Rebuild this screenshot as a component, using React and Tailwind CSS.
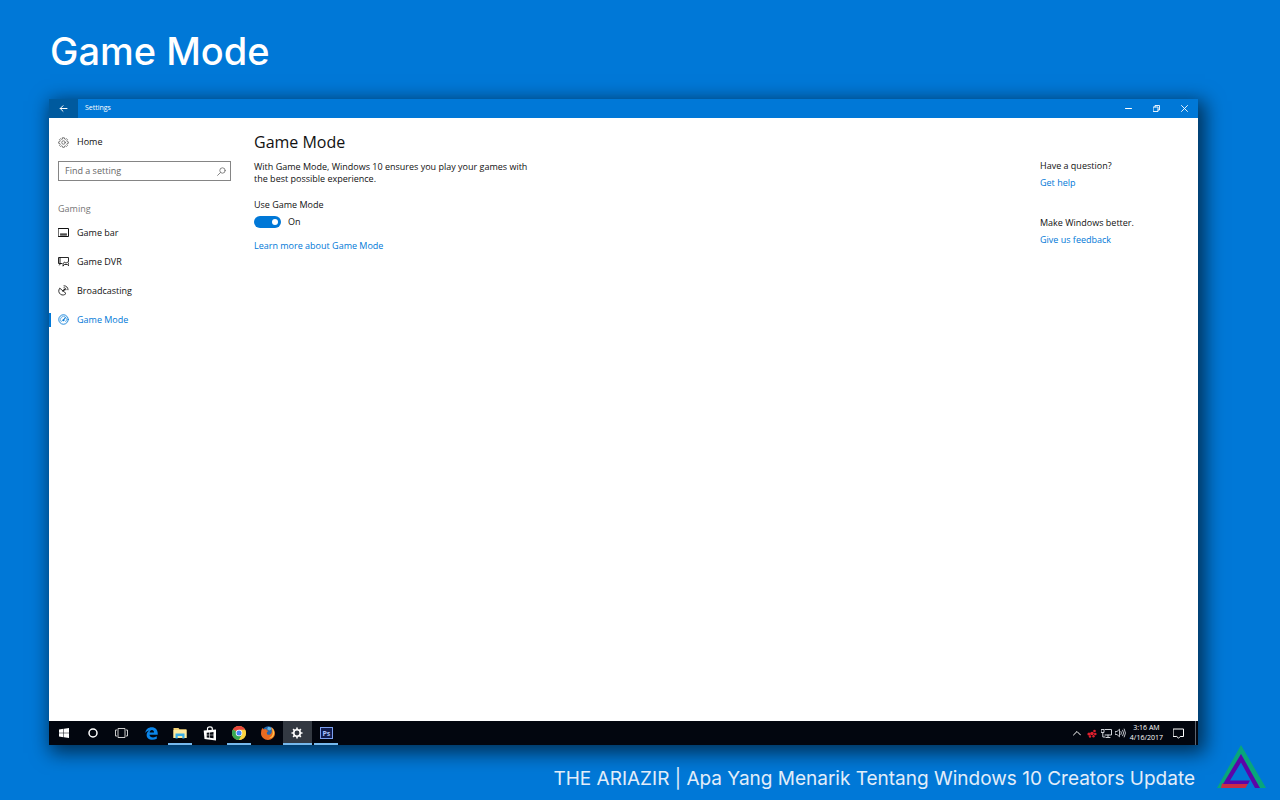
import { useState } from 'react';

const line = { fill: 'none', stroke: 'currentColor', strokeLinecap: 'round', strokeLinejoin: 'round' };

function GearOutline() {
  return (
    <svg viewBox="0 0 22 22" className="size-[11px] text-[#555]" {...line} strokeWidth="1.500">
      <path d="M9.300 1.500h3.400l.5 2.500 1.700.7L17 3.300 19 5.400l-1.400 2 .7 1.800 2.400.5v2.900l-2.400.5-.7 1.800 1.400 2-2.100 2.100-2-1.400-1.700.7-.5 2.400H9.300l-.5-2.400-1.700-.7-2 1.400L3 16.900l1.400-2-.7-1.800-2.400-.5V9.700l2.400-.5.7-1.800L3 5.400l2.100-2.100 2 1.400 1.700-.7z" />
      <circle cx="11" cy="11" r="3.500" />
    </svg>
  );
}

function GameBarIcon() {
  return (
    <svg viewBox="0 0 11 11" className="size-[11px]" {...line} strokeWidth="1">
      <rect x="0.5" y="1.500" width="10" height="8" />
      <path d="M2.500 7h6M2.500 8h6" />
    </svg>
  );
}

function DvrIcon() {
  return (
    <svg viewBox="0 0 22 22" className="size-[11px]" {...line} strokeWidth="1.800">
      <path d="M8 15H1V3h20v8M4 3v12M5 15l-2 3" />
      <path d="M10 19.500c0-4 1-7 3-7l1.500 1h3l1.500-1c2 0 2.500 3 2.500 7l-3-2.500h-5z" />
    </svg>
  );
}

function BroadcastIcon() {
  return (
    <svg viewBox="0 0 22 22" className="size-[11px]" {...line} strokeWidth="1.700">
      <path d="M3 7c-3 4-1.500 9 2 11.500s8 2 10.500-1z" />
      <path d="M9.500 12.500 13 9M12 5.500c2.500 0 4 1.500 4 4M12 1.500c5 0 8 3.500 8 8" />
      <circle cx="12.500" cy="9.500" r="1" />
    </svg>
  );
}

function GaugeIcon() {
  return (
    <svg viewBox="0 0 22 22" className="size-[11px]" {...line} strokeWidth="1.700">
      <circle cx="11" cy="11" r="9.500" />
      <path d="M6.500 15.500a6.300 6.300 0 1 1 9 0" strokeWidth="1.200" />
      <path d="m10.500 12.500 4-5" strokeWidth="2.200" />
      <circle cx="10.500" cy="12.500" r="1.300" />
    </svg>
  );
}

const navItems = [
  { label: 'Game bar', Icon: GameBarIcon },
  { label: 'Game DVR', Icon: DvrIcon },
  { label: 'Broadcasting', Icon: BroadcastIcon },
  { label: 'Game Mode', Icon: GaugeIcon, active: true },
];

function TitleBar() {
  return (
    <header className="flex h-[19px] items-stretch bg-[#0078d7] text-white">
      <button aria-label="Back" className="flex w-[29px] items-center justify-center bg-[#005a9e]">
        <svg viewBox="0 0 9 9" className="size-[9px]" {...line} strokeWidth="1">
          <path d="M8 4.500H1.200M4 1.700 1.200 4.500 4 7.300" />
        </svg>
      </button>
      <span className="flex flex-1 items-center pl-[7px] text-[7px] font-medium">Settings</span>
      <button aria-label="Minimize" className="flex w-7 items-center justify-center">
        <svg viewBox="0 0 7 7" className="size-[7px]" {...line}><path d="M.5 3.500h6" /></svg>
      </button>
      <button aria-label="Restore" className="flex w-7 items-center justify-center">
        <svg viewBox="0 0 7 7" className="size-[7px]" {...line} strokeWidth=".9">
          <path d="M.5 2h4.500v4.500H.5zM2 2V.5h4.500V5H5" />
        </svg>
      </button>
      <button aria-label="Close" className="flex w-7 items-center justify-center">
        <svg viewBox="0 0 7 7" className="size-[7px]" {...line} strokeWidth=".9"><path d="m.5.500 6 6m0-6-6 6" /></svg>
      </button>
    </header>
  );
}

function Sidebar() {
  return (
    <aside className="w-[205px] shrink-0 pt-[10px]">
      <a href="#home" className="flex h-7 items-center gap-2 pl-[9px]">
        <GearOutline />
        Home
      </a>
      <div className="mt-[5px] mr-[23px] ml-[9px] flex h-5 items-center border border-[#858585] pr-1 pl-[6px]">
        <input
          type="search"
          aria-label="Find a setting"
          placeholder="Find a setting"
          className="min-w-0 flex-1 bg-transparent outline-none placeholder:text-[#666]"
        />
        <svg viewBox="0 0 9 9" className="size-[9px] text-[#777]" {...line} strokeWidth=".9">
          <circle cx="5.500" cy="3.500" r="2.700" />
          <path d="M3.500 5.500.6 8.400" />
        </svg>
      </div>
      <h2 className="mt-5 pl-[9px] leading-[16px] text-[#767676]">Gaming</h2>
      <nav className="mt-px">
        {navItems.map(({ label, Icon, active }) => (
          <a
            key={label}
            href="#settings"
            aria-current={active ? 'page' : undefined}
            className={active ? 'flex h-[29px] items-center text-[#0078d7]' : 'flex h-[29px] items-center'}
          >
            <span className={active ? 'h-[14px] w-[2px] bg-[#0078d7]' : 'h-[14px] w-[2px]'} />
            <span className="flex items-center gap-2 pl-[7px]">
              <Icon />
              {label}
            </span>
          </a>
        ))}
      </nav>
    </aside>
  );
}

function GameModePanel() {
  const [on, setOn] = useState(true);
  return (
    <section className="min-w-0 flex-1 pt-[13px]">
      <h2 className="text-[16px] leading-[22px]">Game Mode</h2>
      <p className="mt-2 max-w-[284px] leading-3">
        With Game Mode, Windows 10 ensures you play your games with the best possible experience.
      </p>
      <label htmlFor="game-mode" className="mt-[14px] block leading-3">Use Game Mode</label>
      <div className="mt-[5px] flex h-3 items-center gap-[7px]">
        <input
          id="game-mode"
          type="checkbox"
          role="switch"
          checked={on}
          onChange={(e) => setOn(e.target.checked)}
          className="flex h-3 w-[27px] appearance-none items-center rounded-full bg-[#999] px-[3px] before:size-[6px] before:rounded-full before:bg-white checked:justify-end checked:bg-[#0078d7]"
        />
        <span>{on ? 'On' : 'Off'}</span>
      </div>
      <a href="#learn" className="mt-3 block w-fit leading-3 text-[#0078d7]">Learn more about Game Mode</a>
    </section>
  );
}

function HelpPanel() {
  return (
    <aside className="w-[158px] shrink-0 pt-[42px] leading-3">
      <p>Have a question?</p>
      <a href="#help" className="mt-[5px] block w-fit text-[#0078d7]">Get help</a>
      <p className="mt-7">Make Windows better.</p>
      <a href="#feedback" className="mt-[5px] block w-fit text-[#0078d7]">Give us feedback</a>
    </aside>
  );
}

function WindowsLogo() {
  return (
    <svg viewBox="0 0 10 10" className="size-[10px]" fill="white">
      <path d="M0 1.500 4.500.8v4H0zM5 .7 10 0v4.800H5zM0 5.300h4.500v4L0 8.600zM5 5.300h5V10l-5-.7z" />
    </svg>
  );
}

function Cortana() {
  return <svg viewBox="0 0 10 10" className="size-[10px]" fill="none" stroke="white" strokeWidth="1.500"><circle cx="5" cy="5" r="4" /></svg>;
}

function TaskView() {
  return (
    <svg viewBox="0 0 13 10" className="h-[10px] w-[13px]" fill="none" stroke="#ccc" strokeWidth="1">
      <path d="M3 .5h7v9H3zM2 2H.5v6H2M11 2h1.500v6H11" />
    </svg>
  );
}

function Edge() {
  return (
    <svg viewBox="0 0 24 24" className="size-[13px]" fill="#0a84e8">
      <path d="M.5 11C1.500 4.500 6 .5 12.300.5 19.500.5 23.500 5.500 23.500 12v2.500H8.300c.3 3.300 3 4.800 6.500 4.800 2.700 0 4.900-.8 7-2.100v4.700c-2.400 1.200-5 1.700-8 1.700C7 23.600 3 20 3 14.700c0-3.600 2-6.500 5.300-8.200C5.300 7 2.500 8.400.5 11zm8-.8h8.200c0-2.900-1.500-4.600-4-4.600-2.300 0-3.900 1.800-4.200 4.600z" />
    </svg>
  );
}

function Explorer() {
  return (
    <svg viewBox="0 0 14 12" className="h-3 w-[14px]">
      <path d="M.5 1h5l1 1.300h7V11H.5z" fill="#f5d477" />
      <path d="M.5 3h13v8H.5z" fill="#fdeaa0" />
      <path d="M2.500 11.500V6.500h9v5H9.300V9H4.700v2.500z" fill="#39aee8" />
    </svg>
  );
}

function Store() {
  return (
    <svg viewBox="0 0 14 15" className="h-[15px] w-[14px]">
      <path d="M4.500 5V2.700C4.500.2 9.300.2 9.300 2.700V5" fill="none" stroke="white" strokeWidth="1.200" />
      <path d="M.7 4.500 13 3.500V14.500L1.500 13z" fill="white" />
      <path d="M3.700 6.800 6.400 6.500v2.200H3.700zM7 6.400l3.500-.4v2.700H7zM3.700 9.300h2.700v2.400l-2.700-.3zM7 9.300h3.500v2.900L7 11.800z" fill="#050910" />
    </svg>
  );
}

function Chrome() {
  return (
    <svg viewBox="0 0 24 24" className="size-[14px]">
      <circle cx="12" cy="12" r="12" fill="#fbd341" />
      <path d="M12 12 1.600 6A12 12 0 0 1 22.400 6z" fill="#e8453c" />
      <path d="M1.600 6A12 12 0 0 0 12 24l5.200-9L12 12z" fill="#38a852" />
      <path d="M12 6.500h10.600A12 12 0 0 1 12 24l5.200-9z" fill="#fbd341" />
      <circle cx="12" cy="12" r="5.600" fill="white" />
      <circle cx="12" cy="12" r="4.300" fill="#4285f4" />
    </svg>
  );
}

function Firefox() {
  return (
    <svg viewBox="0 0 24 24" className="size-[14px]">
      <circle cx="12.500" cy="11" r="10.500" fill="#2468ad" />
      <path d="M12 1.500c3 0 5.500 1 7.500 3l-5 3-4-2z" fill="#5db5e9" />
      <path d="M2 3.500 5 6c1.500-1 3-1.200 4.500-1-.5 1-.3 1.800.5 2.500l3 .6-3 2.400c-.8 4 3 6 6 3.500 3-2.300 3-6 2-9.500l-.5-3C21.500 4 24 8 24 12.500 24 19 18.500 24 12 24S0 19 0 12.500C0 9 .7 6 2 3.500z" fill="#e96a20" />
      <path d="M18 3c4.500 3 5.500 8 4 12.500-1.500 4-5 6-9 5.500 4-1 7-4 7.200-8.500.1-3-.5-6.500-2.200-9.500z" fill="#ffc646" />
    </svg>
  );
}

function SettingsGear() {
  return (
    <svg viewBox="0 0 24 24" className="size-3" fill="none" stroke="white">
      <circle cx="12" cy="12" r="6.500" strokeWidth="3.200" />
      <path d="M12 1v4M12 19v4M1 12h4M19 12h4M4.200 4.200 7 7M17 17l2.800 2.800M19.800 4.200 17 7M7 17l-2.800 2.800" strokeWidth="3.200" />
    </svg>
  );
}

function Photoshop() {
  return (
    <span className="flex h-3 w-[13px] items-center justify-center border border-[#7c9ff0] bg-[#101c50] text-[7px] leading-none font-bold text-[#a9c2ff]">
      Ps
    </span>
  );
}

const apps = [
  { name: 'Start', Icon: WindowsLogo },
  { name: 'Cortana', Icon: Cortana },
  { name: 'Task View', Icon: TaskView },
  { name: 'Microsoft Edge', Icon: Edge },
  { name: 'File Explorer', Icon: Explorer, open: true },
  { name: 'Store', Icon: Store },
  { name: 'Google Chrome', Icon: Chrome, open: true },
  { name: 'Firefox', Icon: Firefox },
  { name: 'Settings', Icon: SettingsGear, open: true, focused: true },
  { name: 'Photoshop', Icon: Photoshop, open: true },
];

function Taskbar() {
  return (
    <footer className="flex h-6 items-stretch justify-between bg-[#02060f] text-white">
      <div className="grid w-[292px] grid-cols-10">
        {apps.map(({ name, Icon, open, focused }) => (
          <button
            key={name}
            aria-label={name}
            className={focused ? 'flex flex-col items-center bg-[#333942]' : 'flex flex-col items-center'}
          >
            <span className="flex flex-1 items-center pt-[2px]"><Icon /></span>
            <span className={open ? (focused ? 'h-[2px] w-full bg-[#76b9ed]' : 'h-[2px] w-6 bg-[#76b9ed]') : 'h-[2px]'} />
          </button>
        ))}
      </div>
      <div className="flex items-center">
        <button aria-label="Show hidden icons" className="mr-[6px]">
          <svg viewBox="0 0 8 6" className="h-[6px] w-2" {...line}><path d="M.5 5 4 1.500 7.500 5" /></svg>
        </button>
        <svg viewBox="0 0 10 9" className="mr-1 h-[9px] w-[10px]" fill="#df1f2d">
          <circle cx="2" cy="5" r="1.600" /><circle cx="5" cy="4.500" r="1.800" /><circle cx="7.500" cy="2" r="1.300" />
          <circle cx="8.300" cy="5" r="1.300" /><circle cx="3" cy="7.500" r="1.200" /><circle cx="6.500" cy="7.300" r="1.200" />
        </svg>
        <svg viewBox="0 0 11 10" className="mr-[3px] h-[10px] w-[11px] text-[#d0d4da]" {...line}>
          <path d="M4 1.500h6.500v5.500H4M7 7v2M5 9.500h4M.5 1.500h2.500v3H.5zM1.800 4.500v4.500H4" />
        </svg>
        <svg viewBox="0 0 11 10" className="mr-1 h-[10px] w-[11px] text-[#d0d4da]" {...line} strokeWidth=".9">
          <path d="M.5 3.500H2L4.500 1.200v7.600L2 6.500H.5zM6 3.500q1 1.500 0 3M7.700 2.200q2 2.800 0 5.600M9.300 1q2.500 4 0 8" />
        </svg>
        <time dateTime="2017-04-16T03:16" className="text-center text-[7px] leading-[10px]">
          3:16 AM<br />4/16/2017
        </time>
        <button aria-label="Notifications" className="mr-[11px] ml-[10px]">
          <svg viewBox="0 0 11 11" className="size-[11px]" {...line}>
            <path d="M.5 1h10v7.500H7.200L5.500 10.200 3.800 8.500H.5z" />
          </svg>
        </button>
        <button aria-label="Show desktop" className="h-6 w-[3px] border-l border-[#5c6470]" />
      </div>
    </footer>
  );
}

function Triangle() {
  return (
    <svg viewBox="0 0 49 44" className="h-11 w-[49px] shrink-0" aria-hidden="true">
      <path d="M0 43 24 0l25 43h-7L24 9 5 43z" fill="#08a67b" />
      <path d="M5 38.500h26L28.500 43H4z" fill="#cc2d43" />
      <path d="M24 9 43 43h-5L24 17.500 13 35.500h20L31 39H6z" fill="#5b06a8" />
    </svg>
  );
}

export default function App() {
  return (
    <div className="flex min-h-screen flex-col bg-[#0078d7] font-['Open_Sans','Noto_Sans',sans-serif]">
      <h1 className="flex h-[99px] items-center px-[50px] pt-[3px] font-['Inter',sans-serif] text-[38px] leading-none font-medium text-white">
        Game Mode
      </h1>
      <main className="mr-[82px] ml-[49px] flex flex-1 flex-col bg-white text-[9px] text-[#111] shadow-[4px_5px_18px_3px_rgba(0,0,0,0.6)]">
        <TitleBar />
        <div className="flex flex-1">
          <Sidebar />
          <GameModePanel />
          <HelpPanel />
        </div>
        <Taskbar />
      </main>
      <footer className="flex h-[55px] items-start justify-end gap-[22px] pr-[14px] font-['Inter',sans-serif] text-[19px] leading-7 text-[#e2edf9]">
        <p className="pt-5">THE ARIAZIR | Apa Yang Menarik Tentang Windows 10 Creators Update</p>
        <Triangle />
      </footer>
    </div>
  );
}
